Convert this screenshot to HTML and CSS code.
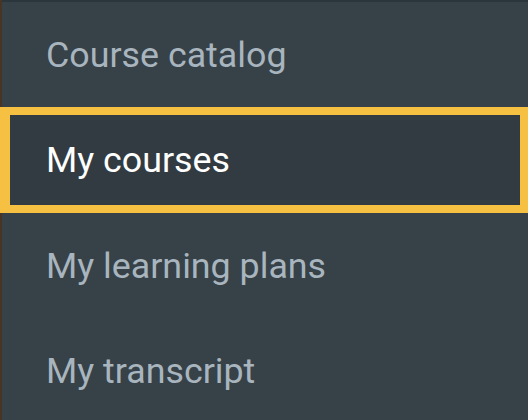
FILE: index.html
```html
<!DOCTYPE html>
<html lang="en">
<head>
<meta charset="utf-8">
<link rel="stylesheet" href="styles.css">
</head>
<body>
<nav class="menu">
  <a class="item" href="#">Course catalog</a>
  <a class="item item--active" href="#">My courses</a>
  <a class="item" href="#">My learning plans</a>
  <a class="item" href="#">My transcript</a>
</nav>
</body>
</html>
```
FILE: styles.css
```css
html, body {
  margin: 0;
  padding: 0;
  height: 100%;
}
body {
  background: #4a3424;
  font-family: Roboto, "Noto Sans", sans-serif;
  overflow: hidden;
}
.menu {
  margin-left: 2px;
  height: 100%;
  background: #374148;
  border-top: 2px solid #2b353c;
  display: flex;
  flex-direction: column;
}
.item {
  box-sizing: border-box;
  height: 105px;
  flex: none;
  display: flex;
  align-items: center;
  padding-left: 44px;
  font-size: 35.8px;
  color: #a8b5be;
  text-decoration: none;
}
.item--active {
  height: 106px;
  margin-left: -2px;
  border: 8px solid #f6c142;
  border-left-width: 10px;
  padding-left: 36px;
  background: #313b41;
  color: #ffffff;
}
```
